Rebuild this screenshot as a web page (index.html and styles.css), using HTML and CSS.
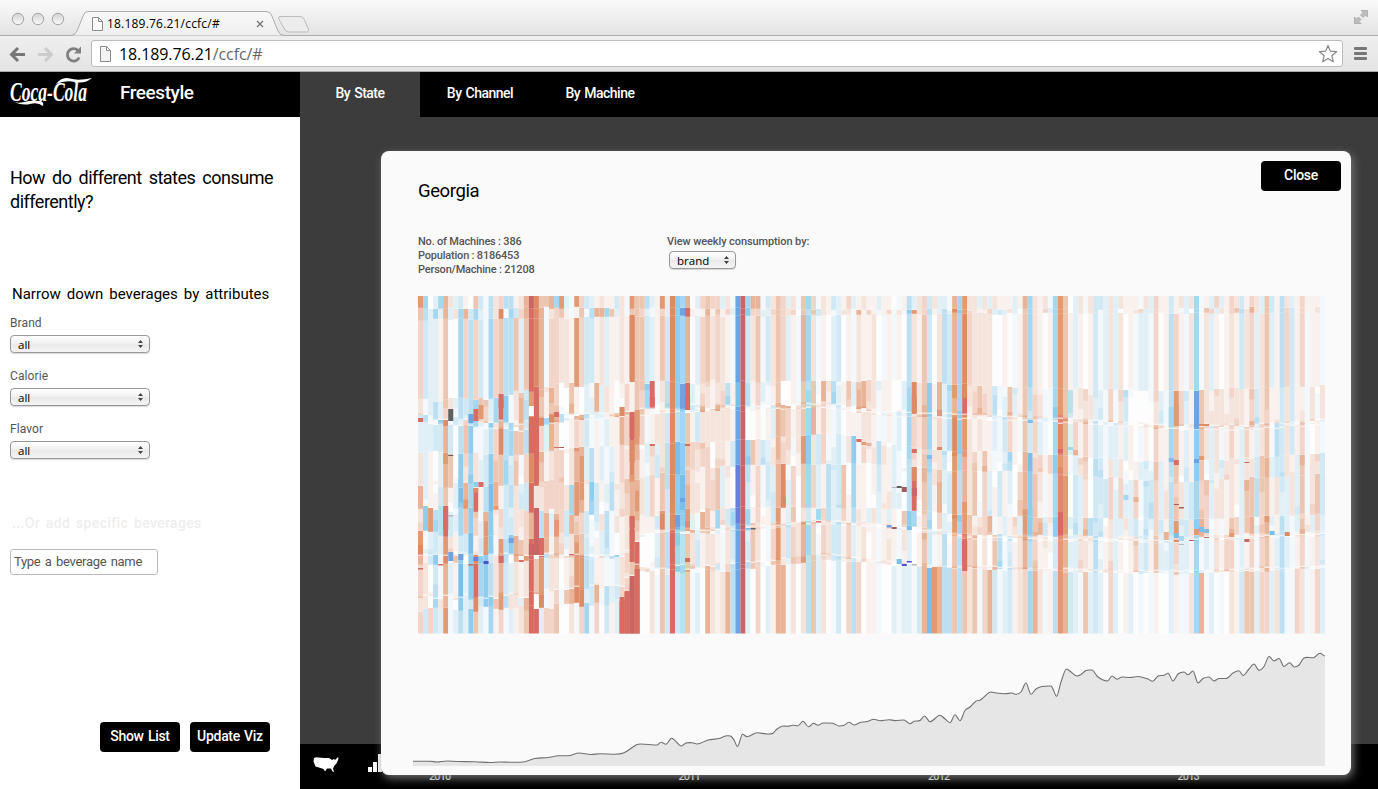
FILE: index.html
```html
<!DOCTYPE html>
<html lang="en">
<head>
<meta charset="utf-8">
<title>Freestyle</title>
<link rel="stylesheet" href="styles.css">
</head>
<body>
<div class="window">
  <header class="chrome">
    <div class="tabstrip">
      <svg class="tab-art" width="320" height="36" viewBox="0 0 320 36">
        <defs><linearGradient id="tabfill" x1="0" y1="0" x2="0" y2="1"><stop offset="0" stop-color="#f8f8f8"/><stop offset="1" stop-color="#efefef"/></linearGradient>
        <linearGradient id="light" x1="0" y1="0" x2="0" y2="1"><stop offset="0" stop-color="#d2d2d2"/><stop offset="1" stop-color="#fbfbfb"/></linearGradient></defs>
        <path d="M0 36V35.500H71Q75 35.500 77 31L83.500 15Q85 11.500 88 11.500H266Q270 11.500 271.500 15L278 31Q280 35.500 284 35.500H320V36Z" fill="url(#tabfill)" stroke="#acacac"/>
        <path d="M280 16.500H300Q303 16.500 304 19L308 28Q309.500 32 306 32H289Q286 32 284.500 29L279 19.500Q277.500 16.500 280 16.500Z" fill="#ececec" stroke="#bbb"/>
        <g fill="url(#light)" stroke="#a5a5a5"><circle cx="18" cy="19" r="5.700"/><circle cx="38" cy="19" r="5.700"/><circle cx="58" cy="19" r="5.700"/></g>
        <path d="M92.500 17.500h6l4 4v9h-10zM98.500 17.500v4h4" fill="#fff" stroke="#8b8b8b"/>
        <path d="M257 21l6 6m0-6l-6 6" stroke="#777" stroke-width="1.400"/>
      </svg>
      <span class="tab-title">18.189.76.21/ccfc/#</span>
      <svg class="expand" width="14" height="14" viewBox="0 0 14 14" fill="#bdbdbd" stroke="#999" stroke-width=".6"><path d="M7 .500h6.500V7l-2-2-2.500 2.500L6.500 5 9 2.500zM.500 7v6.500H7l-2-2 2-2L4.500 7l-2 2z"/></svg>
    </div>
    <div class="toolbar">
      <svg class="nav" width="90" height="34" viewBox="0 0 90 34" fill="none" stroke-width="3">
        <path d="M25 17.500H12M18 11l-6.500 6.500L18 24" stroke="#777"/>
        <path d="M38 17.500h13M45 11l6.500 6.500L45 24" stroke="#ccc"/>
        <path d="M78.500 14a6.200 6.200 0 1 0 .7 6.500" stroke="#808080" stroke-width="2.800"/><path d="M81 9.500v7h-7z" fill="#808080"/>
      </svg>
      <div class="omnibox">
        <svg width="14" height="18" viewBox="0 0 14 18"><path d="M1.500 1.500h6l4 4v11h-10zM7.500 1.500v4h4" fill="#f4f4f4" stroke="#8b8b8b"/></svg>
        <span class="url"><b>18.189.76.21</b>/ccfc/#</span>
        <svg class="star" width="20" height="20" viewBox="0 0 20 20"><path d="M10 1.500l2.400 5.700 6.100.5-4.700 4 1.500 6L10 14.500l-5.300 3.200 1.500-6-4.700-4 6.100-.5z" fill="#fff" stroke="#888" stroke-width="1.200" stroke-linejoin="round"/></svg>
      </div>
      <div class="burger"><i></i><i></i><i></i></div>
    </div>
  </header>

  <div class="app">
    <aside class="side">
      <div class="brandbar">
        <svg class="logo" width="90" height="38" viewBox="0 0 90 38">
          <text class="logo-text" x="2" y="26" textLength="77" lengthAdjust="spacingAndGlyphs">Coca-Cola</text>
          <path d="M4 26Q9 29 16 27T33 26Q36 28 35 31Q30 27 22 29T4 26M48 9Q54 1 62 3.500T84 3Q77 9 67 7T48 9" fill="#fff"/>
        </svg>
        <span class="product">Freestyle</span>
      </div>
      <h1>How do different states consume<br>differently?</h1>
      <h2>Narrow down beverages by attributes</h2>
      <div class="field"><label>Brand</label><div class="select"><span>all</span><svg width="5" height="8" viewBox="0 0 5 8"><path d="M2.500 0L5 3H0zM2.500 8L5 5H0z"/></svg></div></div>
      <div class="field"><label>Calorie</label><div class="select"><span>all</span><svg width="5" height="8" viewBox="0 0 5 8"><path d="M2.500 0L5 3H0zM2.500 8L5 5H0z"/></svg></div></div>
      <div class="field"><label>Flavor</label><div class="select"><span>all</span><svg width="5" height="8" viewBox="0 0 5 8"><path d="M2.500 0L5 3H0zM2.500 8L5 5H0z"/></svg></div></div>
      <h3>...Or add specific beverages</h3>
      <div class="input">Type a beverage name</div>
      <div class="actions"><button class="btn">Show List</button><button class="btn">Update Viz</button></div>
    </aside>

    <main class="main">
      <nav class="tabs"><a class="active">By State</a><a>By Channel</a><a>By Machine</a></nav>
      <div class="stage"></div>
      <footer class="foot">
        <svg class="foot-icons" width="90" height="45" viewBox="0 0 90 45" fill="#fff">
          <path d="M14 14l2-.8L24 14h5l3 2 2-1 1 1 3-3 .5 2-2 4.500-2 2-1.500 3 1 3.500-1.500-.5-1.500-3h-4l-2 3-1.500-2.500-3-1-5-1.500-2-5z"/>
          <path d="M68 23h4v5h-4zM73 18h4v10h-4zM78 10h4v18h-4z"/>
        </svg>
        <div class="years"><span>2010</span><span>2011</span><span>2012</span><span>2013</span></div>
      </footer>

      <section class="modal">
        <div class="modal-head"><h4>Georgia</h4><button class="btn">Close</button></div>
        <div class="info">
          <div class="stats"><p>No. of Machines : 386</p><p>Population : 8186453</p><p>Person/Machine : 21208</p></div>
          <div class="by"><label>View weekly consumption by:</label><div class="select small"><span>brand</span><svg width="5" height="8" viewBox="0 0 5 8"><path d="M2.500 0L5 3H0zM2.500 8L5 5H0z"/></svg></div></div>
        </div>
        <svg id="heat" class="heat" width="908" height="338" viewBox="0 0 908 338"></svg>
        <svg id="area" class="area" width="914" height="120" viewBox="412 650 914 120"></svg>
      </section>
    </main>
  </div>
</div>
<script src="chart.js"></script>
</body>
</html>
```
FILE: chart.js
```js
// Weekly consumption: one column per week, one string per brand band.
// Digits are warm shades (0 = neutral, 9 = strongest); letters are cool shades.
const palette = {
  0: '#fdfdfd', 1: '#f9f1ed', 2: '#f5e4dc', 3: '#f2d5c8', 4: '#edc6b2', 5: '#e8b396', 6: '#e29a74', 7: '#df8a66',
  8: '#d86b62', 9: '#c96563', a: '#f2f8fc', b: '#e1f0f7', c: '#d1e9f4', d: '#bce0f2', e: '#a5d7f0', f: '#8fcdee',
  g: '#7abfe9', h: '#71a2e0', i: '#6a80d8', K: '#5f605f', R: '#a05f5d', G: '#b9b9bc', V: '#4d50d0'
};
const lowerRight = 'a2ch9c420a 362c325e3a 32cc13b120 1a121a2b01 4ca1da4d83 40204dac12 5d3110c65b b221da12b1 013bc14bbc 3bb1eaba21 33ab13a341 bdba13a12b';
const bands = {
  A: '6e0be52bc1 04cad23dd1 2597445e6b a63cb1211c 2a644db16b 7fe50b3433 b2ah9e55ac 243b2a4e3a 21cb13b121 1b110a1db2 3c2bba5e62 2b2b2111b1 5e212ae640 b2a2ccb2b2 111a2b311c 12b2ea1b3b 132c132b4c 1d2b13111a',
  B: '4dbeb5b2e5 cebad27aec 35875a2341 a14ad55e4b 2a443ba13b 7fh81a1514 13bh9f33bb 3432304d4c 21ab22a513 1a13a2af62 3d1bdb7f63 2113bcb2b0 4e213be640 b2a2cab2b0 1123bb311c 1ab0ea43b2 134d252b4c 1d3c13112a',
  C: '3cbb1400e3 d3cae34dd4 b4875a3322 163cc12b11 21744cb14c 7fe50b3423 21ah9c24ac 243b1a5e2a 10bc01a211 20a1a10d21 4c02dc5e73 22220010a1 4e2101e641 b101cab2b2 01abba301d 31a2ea2b10 121c23b24b 1d3c13a11a',
  D: '2abdb32bdc df43be8fa2 5d68415300 410bb5b210 13143e8a2d 7fh8ba3212 3d1g9d13ba 14001a4e4a 51eb14b553 2a1100be72 4f15bd5e82 3432dab4b1 4d32aae64d 1222bba3a2 c000002bad 63b1h42122 122213c241 1c2c11a2a2',
  F: 'bbbcc5c0d4 faabd37de4 4d883b5300 132ca1ab11 53863a122c 7de41c2222 221h900101 b543124e51 31ab011122 1aa1ab0e32 4e13bd7f62 1211bac31a 4c3ba0e75b 3131cbabb1 b10a10311e 41b1f42b2a 131b31b24a dc2c13a01a',
  G: '2b10b540f2 e2bcf44ec4 a378412330 256bd1bab1 32741b2c2d 7gf4323302 21ch9e42cb 2532a26f2c 3abca2fa31 2d21ba0e31 4d22ca6e52 3141a0be10 5g3313f65a b230dca2b2 011bba4b1d 41c1f4ab2b 221b22c45b cc21b4a22c',
  H: '5b11c41bg5 e81dg51cd2 cc82233332 e661fc1bd1 23562b314c 7fg5221334 b10i9c13ac b57b304e3b 1dbc40e110 1c11ba0d81 4d15bc6d52 403b1c1b03 5f42a1e760 cb20ccc3b3 bb3acc3b2d 42bce33b22 121b44d341 2bb2b4a24c',
  P: '2f6ed8cbe4 f3b6f13cc2 2359d5b63c 543cab2da2 1284111c7c 7hf6ba541e 2cei9e1301 c61b402c1e 3dbb31d21b 2b1b104fe1 3e03bb6e64 2235a1b13b 6f45c1f86b db4dcc12bb 2bcacb3c1d 6bc2f53a1a 143b45b35b 1dbab41b3b',
  I: '6abcb621cc g1c6fa6df5 438985143b 264ca1bda0 12831dab2c 8he50b3521 ' + lowerRight,
  J: '320ca5b1gb f8efd25cb2 12846b2201 266dc11aab 2348000b4d 8ed42c1221 ' + lowerRight,
  K: '3c3cb6abdb f4bae13ab1 2488b33400 2a3ea30c1b 8898002a4c 8cd4ab0521 25dh9b030b 155a202d4b 20ac03d301 1a00babbac 5g65dd4d42 4a35cabc12 3e52a1d65c ba4bcb03b0 1b0a0a100b 1aa2e5ab0a 021c44b33b 2daa32a13b'
};
for (const k in bands) bands[k] = bands[k].replace(/ /g, '');
const order = ['A', 'B', 'C', 'D', 'E', 'F', 'G', 'H', 'P', 'I', 'Z', 'J', 'L', 'K'];
// Lower edge of every band, as [week, y] knots.
const edges = {
  A: [[0, 309], [30, 308], [100, 310], [179, 308]],
  B: [[0, 320], [30, 318], [60, 316], [110, 314], [179, 313]],
  C: [[0, 400], [15, 397], [28, 386], [42, 382], [60, 382], [95, 381], [120, 388], [150, 391], [179, 386]],
  D: [[0, 417], [20, 424], [28, 416], [50, 408], [80, 404], [92, 412], [120, 417], [150, 426], [165, 426], [179, 420]],
  E: [[0, 423], [20, 431], [28, 422], [50, 413], [80, 408], [92, 416], [120, 421], [150, 430], [165, 430], [179, 424]],
  F: [[0, 452], [20, 455], [30, 448], [50, 443], [66, 440], [82, 433], [100, 450], [120, 453], [150, 463], [179, 453]],
  G: [[0, 486], [40, 482], [60, 466], [90, 464], [105, 471], [120, 472], [150, 483], [179, 474]],
  H: [[0, 508], [45, 515], [60, 508], [90, 508], [110, 516], [150, 520], [179, 514]],
  P: [[0, 533], [20, 538], [50, 529], [80, 520], [95, 525], [110, 535], [150, 537], [179, 531]],
  I: [[0, 556], [25, 555], [40, 556], [45, 531], [60, 531], [80, 522], [95, 527], [110, 538], [150, 541], [179, 534]],
  Z: [[0, 564], [18, 563], [25, 558], [40, 558], [45, 533], [60, 533], [80, 524], [95, 529], [110, 540], [150, 543], [179, 536]],
  J: [[0, 597], [20, 597], [30, 588], [40, 586], [43, 568], [60, 566], [80, 555], [100, 566], [120, 569], [150, 572], [179, 567]],
  L: [[0, 610], [20, 608], [38, 604], [41, 590], [44, 572], [60, 572], [80, 560], [100, 567], [120, 571], [150, 574], [179, 569]]
};
function edgeAt(k, i) {
  const p = edges[k];
  for (let n = 1; n < p.length; n++) if (i <= p[n][0]) {
    const t = (i - p[n - 1][0]) / (p[n][0] - p[n - 1][0]);
    return p[n - 1][1] + t * (p[n][1] - p[n - 1][1]);
  }
  return p[p.length - 1][1];
}
let seed = 7;
const rnd = () => (seed = (seed * 16807) % 2147483647) / 2147483647;
const W = 907 / 180;
const out = [];
const rect = (i, y, h, f, o) => out.push(`<rect x="${(i * W).toFixed(2)}" y="${(y - 296).toFixed(1)}" width="${W.toFixed(2)}" height="${h.toFixed(1)}" fill="${f}"${o ? ` opacity="${o}"` : ''}/>`);
const scale = 'ihgfedcba0123456789';
const shift = (c, n) => scale[Math.max(3, Math.min(16, scale.indexOf(c) + n))] || c;
for (let i = 0; i < 180; i++) {
  let y = 296;
  const strong = [22, 50, 63, 64].includes(i);
  for (const k of order) {
    const wob = 'CDGHPJL'.includes(k) && i < 60 ? 6 : 2;
    const end = k === 'K' ? 633.5 : Math.round(edgeAt(k, i) + (rnd() - .5) * wob);
    if (end <= y) continue;
    let c = (bands[k] || bands.C)[i];
    if (k === 'E' || k === 'Z' || k === 'L') {
      const base = bands[k === 'E' ? 'F' : 'J'][i];
      c = strong ? base : shift(base, Math.round((rnd() - .5) * (i < 60 ? 8 : 3)));
    }
    rect(i, y, end - y, palette[c]);
    if (!strong && end - y > 16 && 'DGHPIJ'.includes(k) && rnd() < (k === 'J' ? .2 : .5)) {
      const h = 3 + rnd() * (end - y) * .35;
      rect(i, rnd() < .5 ? y : end - h, h, palette[shift(c, rnd() < .5 ? 1 : -1)]);
    }
    if (k !== 'K') rect(i, end - .7, .7, '#fff', .25);
    if ('DEIJ'.includes(k) && !strong) rect(i, end - 1.5, 1.5, rnd() < .6 ? '#fdfdfd' : palette[shift(c, 2)], .6);
    y = end;
  }
}
// Outlying weeks: [week, y, height, shade]
[[6,409,12,'K'],[10,414,9,'h'],[11,409,12,'8'],[12,405,14,'6'],[0,418,4,'8'],[16,394,14,'8'],[22,406,10,'0'],[22,417,36,'8'],[27,412,5,'8'],
[40,407,9,'7'],[42,412,26,'8'],[42,315,67,'7'],[42,440,22,'7'],[43,410,27,'6'],[46,397,9,'8'],[53,396,14,'8'],[6,455,1,'K'],[27,447,1,'8'],[28,447,1,'R'],[46,444,2,'8'],[53,444,2,'8'],
[11,482,5,'f'],[12,482,5,'8'],[23,391,92,'8'],[23,508,35,'9'],[22,544,11,'9'],[23,544,11,'9'],[24,544,11,'8'],[5,506,24,'8'],[6,515,1.5,'G'],[18,538,5,'h'],[16,556,7,'8'],[6,552,9,'h'],[8,554,6,'h'],
[11,557,4,'i'],[13,561,3,'V'],[10,564,1.5,'9'],[4,564,1.5,'8'],[0,568,1.5,'8'],[20,560,2,'8'],[23,555,1.5,'0'],[24,556,1.5,'8'],[30,554,1.5,'8'],[42,516,12,'8'],[42,530,32,'8'],[42,576,57.5,'9'],[43,569,64.5,'8'],[41,592,41.5,'8'],[40,601,32.5,'8'],
[52,308,7,'h'],[53,308,8,'8'],[52,397,7,'h'],[52,498,4,'h'],[53,558,4,'8'],[66,528,1.5,'K'],[65,528,1.5,'g'],[71,403,4,'5'],[72,497,9,'7'],[79,521,1.5,'8'],
[87,439,3,'8'],[88,442,3,'6'],[89,443,3,'5'],[94,487,1,'G'],[95,486,2,'K'],[96,487,5,'R'],[98,488,8,'9'],[98,449,4,'8'],[98,397,16,'7'],[101,455,4,'g'],[103,447,3,'7'],[103,412,4,'6'],
[93,525,2.5,'h'],[94,527,2,'R'],[95,559,5,'g'],[96,564,2,'V'],[97,561,1.5,'V'],[98,564,1.5,'G'],[97,526,4,'g'],[107,448,6,'f'],[108,541,30,'8'],[106,452,4,'7'],
[149,407,20,'e'],[150,405,21,'6'],[154,407,22,'h'],[149,458,4,'g'],[150,460,5,'8'],[154,459,4,'h'],[155,456,4,'6'],[164,462,1,'9'],[150,504,1,'R'],[151,507,1.5,'R'],
[140,495,5,'e'],[142,497,5,'5'],[150,533,5,'g'],[151,536,5,'e'],[150,540,2,'7'],[153,540,1,'9'],[151,544,1,'G'],[154,529,6,'6'],[155,527,5,'g'],[156,529,4,'g'],[156,537,1,'9'],[148,532,8,'5'],[161,533,4,'6'],[164,539,3,'9'],[169,531,4,'g'],[172,532,4,'7'],[175,529,5,'5'],
[129,447,3,'e'],[130,450,5,'5'],[127,449,4,'8'],[127,512,14,'8'],[128,513,11,'6'],[155,424,2,'7'],[156,424,2,'7'],[165,421,4,'5'],[121,420,3,'g']
].forEach(([i, y, h, c]) => rect(i, y, h, palette[c]));
document.getElementById('heat').innerHTML = out.join('');

const pts = '413,761.3 430,761.3 437,762 447,761 458,761.5 475,761.7 490,762.5 500,762 512,762.3 525,761.7 535,758.5 548,757.5 558,755.8 570,755.5 579,753 591,754.5 600,753.7 615,754.3 624,752.8 636,745 641,744 657,745 661,742.3 666,744.3 671.5,738.3 681.5,746 686,743 692,742.7 697,744 708,740 720,738.3 727,735.8 731,736.2 734,740 737.5,746.5 742.5,734.3 747,736.7 757,732.7 768,734 773,733.2 777,729 783,726 788,726.3 793,725.3 798,725.7 803,721.3 808.5,726.8 813.5,723.3 818,725.2 823,723 833,723.3 839,726 844,725.3 849,722.3 854,725 860,722.5 867,721.5 874,719.3 880,720.7 889,719.7 895,720.6 904,720 910,723.8 914,721.3 920,720.5 924.5,716 930,721.7 940,715.3 944,718 950,722.7 955,714.8 960,720.7 965,710.5 970,707 975.5,701.5 981,699.7 991,692 996,693 1005,693.7 1012,693 1016,694.3 1021,692 1026,683 1031,694.3 1036,689 1042,686.5 1051,686 1053,689 1056.5,696.3 1061,682 1066.5,669 1071,672 1077,676 1081,674.5 1086,670.5 1092,670 1097,676 1102,679.5 1107.5,681 1112,676 1117,679.3 1122,677 1130,677.5 1138,676.5 1148,679 1152.5,681.3 1158,676 1164,675.3 1168,673.3 1173,681 1178,674 1184,672 1188,674.7 1193,671 1198,683 1203,678.5 1209,677 1214,681 1219,678.5 1226,678.5 1233,673 1239,670.7 1243,675.5 1249,669 1254,664 1259,670.3 1264,666.5 1269,656.5 1274,661 1279,658.5 1284,666.5 1289.5,662.7 1294.5,667 1299,665 1304,658 1314,657.5 1320,653.3 1325,656'.split(' ').map(p => p.split(',').map(Number));
let d = `M${pts[0]}`;
for (let i = 1; i < pts.length; i++) {
  const a = pts[i - 2] || pts[i - 1], b = pts[i - 1], c = pts[i], e = pts[i + 1] || c;
  const slope = (p, q, r) => (q[1] - p[1]) * (r[1] - q[1]) <= 0 ? 0 : (r[1] - p[1]) / (r[0] - p[0]);
  const w = (c[0] - b[0]) / 3;
  d += `C${b[0] + w} ${b[1] + w * slope(a, b, c)} ${c[0] - w} ${c[1] - w * slope(b, c, e)} ${c}`;
}
document.getElementById('area').innerHTML = `<path d="${d}V766H413Z" fill="#e6e6e6"/><path d="${d}" fill="none" stroke="#707070" stroke-width="1.1"/>`;
```
FILE: styles.css
```css
* { box-sizing: border-box; }
body { margin: 0; background: #fff; font-family: Roboto, sans-serif; color: #000; overflow: hidden; }
h1, h2, h3, h4, p { margin: 0; font-weight: 500; }
.window { width: 1378px; height: 789px; display: flex; flex-direction: column; }
.chrome { height: 72px; flex: none; font-family: "Open Sans", sans-serif; }
.tabstrip { height: 36px; display: flex; background: linear-gradient(#fafafa, #e3e3e3); border-bottom: 1px solid #b0b0b0; position: relative; }
.tab-art { flex: none; }
.tab-title { position: absolute; left: 107px; top: 15px; font-size: 12px; line-height: 17px; letter-spacing: .2px; }
.expand { margin: 10px 10px 0 auto; }
.toolbar { height: 36px; display: flex; align-items: center; background: linear-gradient(#efefef, #e4e4e4); border-bottom: 1px solid #aaa; }
.nav { flex: none; }
.omnibox { margin-left: 1px; width: 1252px; height: 27px; background: #fff; border: 1px solid #bcbcbc; border-radius: 3px; display: flex; align-items: center; padding: 0 4px 0 7px; }
.url { font-size: 16px; margin-left: 6px; color: #666; letter-spacing: -.1px; }
.url b { font-weight: 400; color: #000; }
.star { margin-left: auto; }
.burger { margin-left: 11px; width: 13px; display: grid; gap: 2px; }
.burger i { height: 3px; background: #777; border-radius: 1px; }
.app { flex: 1; display: flex; min-height: 0; }
.side { width: 300px; flex: none; background: #fff; }
.brandbar { height: 45px; background: #000; display: flex; color: #fff; }
.logo { margin: 3px 0 0 8px; overflow: visible; }
.logo-text { font: italic bold 27px "Liberation Serif", serif; fill: #fff; }
.product { margin-left: 22px; font-size: 19px; line-height: 41px; font-weight: 500; letter-spacing: -.45px; }
.side h1 { font-size: 18px; line-height: 24px; font-weight: 400; margin: 49px 0 0 10px; white-space: nowrap; letter-spacing: -.5px; word-spacing: 3px; }
.side h2 { font-size: 15px; line-height: 20px; margin: 70px 0 0 12px; font-weight: 400; white-space: nowrap; word-spacing: 2.3px; }
.field { height: 53px; padding: 11px 0 0 10px; }
.field label { display: block; font-size: 12px; line-height: 17px; color: #555; letter-spacing: .1px; margin-bottom: 3px; }
.select { width: 140px; height: 18px; border: 1px solid #989898; border-radius: 4px; background: linear-gradient(#fff, #f0f0f0 49%, #e9e9e9 50%, #f4f4f4); box-shadow: 0 1px 1px rgba(0,0,0,.15); display: flex; align-items: center; justify-content: space-between; padding: 0 6px 0 7px; font: 11.500px "Open Sans", sans-serif; }
.select svg { fill: #444; }
.side h3 { margin: 50px 0 0 12px; font-size: 14px; line-height: 20px; color: #eee; letter-spacing: .35px; word-spacing: 2px; font-weight: 500; white-space: nowrap; }
.input { margin: 16px 0 0 10px; width: 148px; height: 26px; border: 1px solid #bbb; border-radius: 3px; padding: 0 3px; line-height: 23px; font-size: 13px; letter-spacing: -.3px; word-spacing: 1.500px; color: #555; white-space: nowrap; }
.actions { margin: 147px 0 0 100px; display: flex; gap: 10px; }
.btn { width: 80px; height: 30px; border: 0; padding: 0 0 3px; border-radius: 4px; background: #000; color: #fff; font: 500 14px Roboto, sans-serif; letter-spacing: -.3px; word-spacing: 1px; white-space: nowrap; }
.main { flex: 1; position: relative; display: flex; flex-direction: column; min-width: 0; }
.tabs { height: 45px; background: #000; display: flex; color: #fff; font-size: 14px; font-weight: 500; line-height: 42px; letter-spacing: -.5px; word-spacing: 1px; text-align: center; }
.tabs a { width: 120px; }
.tabs .active { background: #3c3c3c; }
.stage { flex: 1; background: #3c3c3c; }
.foot { height: 45px; background: #000; display: flex; }
.foot-icons { flex: none; }
.years { display: flex; font-size: 11px; line-height: 12px; letter-spacing: -1px; color: #fff; padding: 27px 0 0 39px; letter-spacing: -.9px; font-weight: 500; }
.years span { width: 249.500px; flex: none; }
.modal { position: absolute; left: 81px; top: 79px; width: 970px; height: 624px; background: #fafafa; border-radius: 8px; box-shadow: 2px 3px 10px #777; }
.modal-head { display: flex; justify-content: space-between; padding: 10px 10px 0 37px; height: 82px; }
.modal h4 { font-size: 18.500px; font-weight: 400; line-height: 24px; margin-top: 18px; letter-spacing: -.4px; }
.info { display: flex; padding-left: 37px; height: 62px; font-size: 11px; line-height: 14px; color: #555; }
.stats { width: 249px; padding-top: 2px; letter-spacing: -.2px; }
.by { padding-top: 2px; }
.by label { display: block; white-space: nowrap; font-weight: 500; letter-spacing: -.1px; }
.select.small { width: 67px; margin: 2px 0 0 2px; color: #000; }
.heat { display: block; margin: 1px 0 0 37px; }
.area { display: block; margin: 16px 0 0 31px; }
```
